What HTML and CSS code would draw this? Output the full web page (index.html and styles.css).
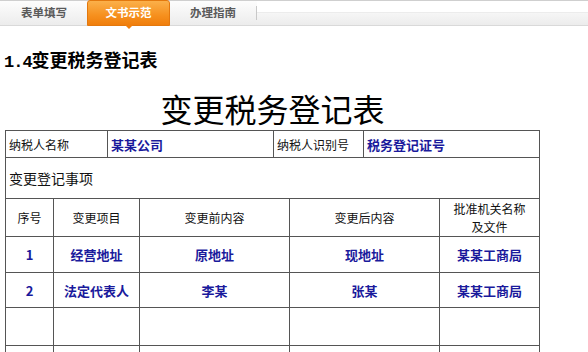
FILE: index.html
```html
<!DOCTYPE html>
<html lang="zh-CN">
<head>
<meta charset="utf-8">
<title>变更税务登记表</title>
<link rel="stylesheet" href="styles.css">
</head>
<body>
<nav class="tabbar">
  <div class="tabs">
    <a class="tab">表单填写</a>
    <a class="tab active">文书示范</a>
    <a class="tab">办理指南</a>
    <span class="sep"></span>
  </div>
  <div class="rest"></div>
</nav>
<h2 class="heading"><span class="num">1.4</span>变更税务登记表</h2>
<div class="doc">
  <h1 class="title">变更税务登记表</h1>
  <table class="form">
    <colgroup>
      <col class="c1"><col class="c2"><col class="c3"><col class="c4">
      <col class="c5"><col class="c6"><col class="c7"><col class="c8">
    </colgroup>
    <tr class="r-info">
      <td colspan="2" class="label">纳税人名称</td>
      <td colspan="2" class="value">某某公司</td>
      <td colspan="2" class="label">纳税人识别号</td>
      <td colspan="2" class="value">税务登记证号</td>
    </tr>
    <tr class="r-section">
      <td colspan="8" class="section">变更登记事项</td>
    </tr>
    <tr class="r-head">
      <th>序号</th>
      <th colspan="2">变更项目</th>
      <th colspan="2">变更前内容</th>
      <th colspan="2">变更后内容</th>
      <th>批准机关名称<br>及文件</th>
    </tr>
    <tr class="r-data r1">
      <td class="data">1</td>
      <td colspan="2" class="data">经营地址</td>
      <td colspan="2" class="data">原地址</td>
      <td colspan="2" class="data">现地址</td>
      <td class="data">某某工商局</td>
    </tr>
    <tr class="r-data r2">
      <td class="data">2</td>
      <td colspan="2" class="data">法定代表人</td>
      <td colspan="2" class="data">李某</td>
      <td colspan="2" class="data">张某</td>
      <td class="data">某某工商局</td>
    </tr>
    <tr class="r-empty">
      <td></td><td colspan="2"></td><td colspan="2"></td><td colspan="2"></td><td></td>
    </tr>
    <tr class="r-empty">
      <td></td><td colspan="2"></td><td colspan="2"></td><td colspan="2"></td><td></td>
    </tr>
  </table>
</div>
</body>
</html>
```

FILE: styles.css
```css
html, body {
  margin: 0;
  padding: 0;
  background: #fff;
}
body {
  font-family: "Noto Sans CJK SC", "Noto Sans", sans-serif;
  color: #000;
  overflow: hidden;
}

/* ---------- tab bar ---------- */
.tabbar {
  display: flex;
  height: 26px;
}
.tabs {
  display: flex;
  align-items: stretch;
  flex: none;
  border-top: 1px solid #cfcfcf;
  border-bottom: 1px solid #d9d9d9;
  background: linear-gradient(#fdfdfd, #ececec);
  box-sizing: border-box;
  padding-left: 13px;
}
.rest {
  flex: 1;
  box-sizing: border-box;
  border-top: 1px solid #cfcfcf;
  border-bottom: 1px solid #d9d9d9;
  background: linear-gradient(#ffffff 0, #ffffff 11px, #e2e2e2 11px, #f6f6f6 12px, #ececec 24px);
}
.tab {
  flex: none;
  width: 62px;
  display: flex;
  align-items: center;
  justify-content: center;
  font-size: 11.5px;
  font-weight: bold;
  color: #5a5a5a;
  padding-bottom: 3px;
  position: relative;
}
.tab.active {
  width: 83px;
  margin: -1px 12px -1px 12px;
  color: #fff;
  background: linear-gradient(#fbb04a, #f6901e 60%, #f07e0c);
  border: 1px solid #e3780e;
  border-radius: 3px 3px 0 0;
  box-sizing: border-box;
}
.tab.active::after {
  content: "";
  position: absolute;
  left: 50%;
  bottom: -4px;
  margin-left: -4px;
  border-left: 4px solid transparent;
  border-right: 4px solid transparent;
  border-top: 4px solid #f07e0c;
}
.sep {
  flex: none;
  width: 1px;
  background: #c8c8c8;
  margin: 5px 0 5px 12px;
}

/* ---------- heading ---------- */
.heading {
  margin: 21px 0 0 4px;
  font-size: 18px;
  line-height: 24px;
  font-weight: bold;
}
.num {
  font-family: "Liberation Mono", monospace;
  font-size: 17px;
  letter-spacing: -1px;
  font-weight: bold;
}

/* ---------- document ---------- */
.doc {
  width: 535px;
  margin: 13px 0 0 5px;
}
.title {
  margin: 0 0 2px;
  text-align: center;
  font-size: 32px;
  line-height: 40px;
  font-weight: normal;
}
.form {
  width: 535px;
  table-layout: fixed;
  border-collapse: collapse;
  border: 1px solid #555;
}
.c1 { width: 48px; }
.c2 { width: 54px; }
.c3 { width: 32px; }
.c4 { width: 134px; }
.c5 { width: 16px; }
.c6 { width: 74px; }
.c7 { width: 76px; }
.c8 { width: 100px; }

.form td, .form th {
  border: 1px solid #555;
  padding: 0;
  font-weight: normal;
}
.r-info { height: 27px; }
.r-section { height: 41px; }
.r-head { height: 38px; }
.r1 { height: 36px; }
.r2 { height: 35px; }
.r-empty { height: 38px; }

.form .label {
  font-size: 12px;
  padding-left: 3px;
  color: #111;
}
.form .value {
  font-size: 13px;
  font-weight: bold;
  color: #1a1a9c;
  padding-left: 3px;
}
.form .section {
  font-size: 14px;
  padding-left: 3px;
  color: #111;
}
.form .r-head th {
  font-size: 12px;
  line-height: 18px;
  color: #111;
  text-align: center;
}
.form .data {
  text-align: center;
  font-size: 13px;
  font-weight: bold;
  color: #1a1a9c;
}
```
